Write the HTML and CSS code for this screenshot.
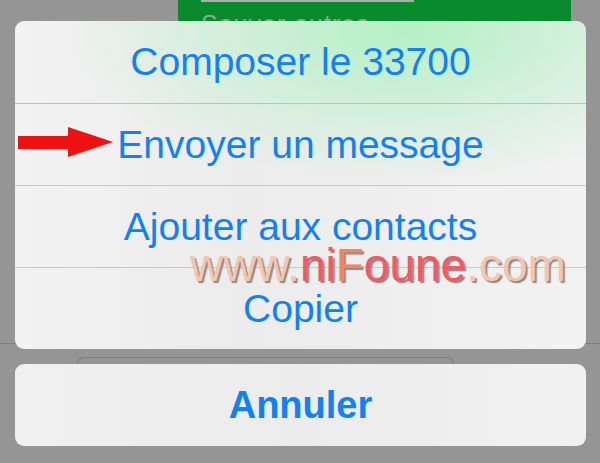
FILE: index.html
```html
<!DOCTYPE html>
<html lang="fr">
<head>
  <meta charset="UTF-8">
  <meta name="viewport" content="width=device-width, initial-scale=1.0">
  <title>Composer le 33700</title>
  <link rel="stylesheet" href="styles.css">
</head>
<body>
  <div class="page">
    <div class="top-strip">
      <div class="green-panel">
        <div class="field"></div>
        <div class="panel-text">Sauver autres</div>
      </div>
    </div>

    <div class="sheet">
      <button class="action">Composer le 33700</button>
      <button class="action">Envoyer un message</button>
      <button class="action">Ajouter aux contacts</button>
      <button class="action">Copier</button>
    </div>

    <div class="gap">
      <div class="ghost"></div>
    </div>

    <button class="cancel">Annuler</button>

    <svg class="arrow" width="96" height="31" viewBox="0 0 96 31">
      <polygon points="0,9 50,9 50,0 95,15 50,30 50,22 0,22" fill="#ee1111"/>
    </svg>

    <div class="watermark"><span class="light">www.</span><span class="red">ni</span><span class="orange">F</span><span class="red">oune</span><span class="light">.com</span></div>
  </div>
</body>
</html>
```

FILE: styles.css
```css
html, body {
  margin: 0;
  padding: 0;
}
body {
  width: 600px;
  height: 463px;
  overflow: hidden;
  background:
    linear-gradient(to bottom, transparent 343px, #7f7f7f 343px, #7f7f7f 344px, transparent 344px),
    #959595;
  font-family: "Liberation Sans", Arial, sans-serif;
}
.page {
  position: relative;
  height: 463px;
}

/* what is behind the sheet */
.top-strip {
  height: 21px;
  overflow: hidden;
}
.green-panel {
  margin-left: 178px;
  width: 393px;
  height: 40px;
  background: #098a2c;
  padding-left: 23px;
  box-sizing: border-box;
}
.field {
  width: 213px;
  height: 2px;
  background: #a8b0aa;
}
.panel-text {
  margin-top: 10px;
  font-size: 25px;
  letter-spacing: 1px;
  color: #86ab92;
  line-height: 25px;
}

/* action sheet */
.sheet {
  margin-left: 15px;
  width: 571px;
  border-radius: 9px;
  overflow: hidden;
  display: flex;
  flex-direction: column;
  background:
    radial-gradient(ellipse 340px 150px at 390px 10px, rgba(176, 240, 196, 0.95), rgba(196, 240, 208, 0.6) 55%, rgba(240, 242, 242, 0) 100%),
    linear-gradient(to right, #f2f2f2, #ececec 40%, #f2f2f2);
}
.action {
  height: 82px;
  border: 0;
  border-top: 1px solid #c6c8cb;
  background: transparent;
  font-family: inherit;
  font-size: 39px;
  color: #1280f6;
  padding: 0;
  cursor: pointer;
}
.action:first-child {
  border-top: 0;
}
.action:nth-child(2) {
  border-top-color: #98d8a8;
}

.gap {
  height: 15px;
  padding-top: 8px;
  box-sizing: border-box;
}
.ghost {
  margin-left: 77px;
  width: 377px;
  height: 7px;
  border: 1px solid #7c7c7c;
  border-bottom: 0;
  border-radius: 8px 8px 0 0;
  box-sizing: border-box;
}

.cancel {
  display: block;
  margin-left: 15px;
  width: 571px;
  height: 82px;
  border: 0;
  border-radius: 9px;
  background: linear-gradient(to right, #f0f0f0, #ececec 50%, #f1f1f1);
  font-family: inherit;
  font-size: 38px;
  font-weight: bold;
  color: #1280f6;
  padding: 0;
}

/* overlays */
.arrow {
  position: absolute;
  left: 18px;
  top: 127px;
}
.watermark {
  position: absolute;
  left: 190px;
  top: 238px;
  font-size: 46px;
  line-height: 54px;
  white-space: nowrap;
  text-shadow: 2px 2px 1px #8a8a8a;
}
.light {
  color: #f6c5b2;
}
.red {
  color: #f25865;
}
.orange {
  color: #f2845e;
}
```
